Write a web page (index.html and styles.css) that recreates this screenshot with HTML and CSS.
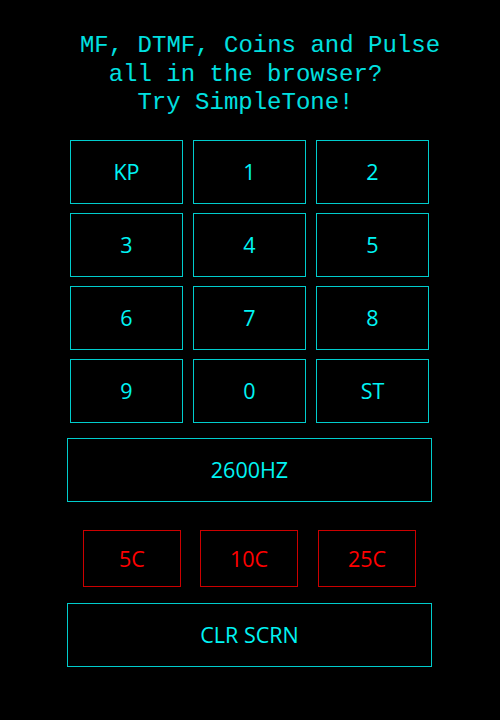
FILE: index.html
```html
<!DOCTYPE html>
<html lang="en">
<head>
<meta charset="utf-8">
<title>SimpleTone</title>
<link rel="stylesheet" href="styles.css">
</head>
<body>
<main class="app">
  <header class="intro">
    <span class="line line-first">MF, DTMF, Coins and Pulse</span>
    <span class="line">all in the browser?</span>
    <span class="line">Try SimpleTone!</span>
  </header>
  <section class="keypad">
    <button class="key">KP</button>
    <button class="key">1</button>
    <button class="key">2</button>
    <button class="key">3</button>
    <button class="key">4</button>
    <button class="key">5</button>
    <button class="key">6</button>
    <button class="key">7</button>
    <button class="key">8</button>
    <button class="key">9</button>
    <button class="key">0</button>
    <button class="key">ST</button>
  </section>
  <button class="key wide tone">2600HZ</button>
  <section class="coins">
    <button class="coin">5C</button>
    <button class="coin">10C</button>
    <button class="coin coin-last">25C</button>
  </section>
  <button class="key wide clear">CLR SCRN</button>
</main>
</body>
</html>
```
FILE: styles.css
```css
html, body {
  margin: 0;
  padding: 0;
  background: #000;
}
.app {
  box-sizing: border-box;
  width: 500px;
  height: 720px;
  padding-right: 1px;
  display: flex;
  flex-direction: column;
  align-items: center;
}
.intro {
  margin-top: 32px;
  padding-right: 8px;
  font-family: "Liberation Mono", monospace;
  font-size: 24px;
  line-height: 28.5px;
  color: #00e0e0;
  text-align: center;
}
.line {
  display: block;
  white-space: pre;
}
.line-first {
  padding-left: 29px;
}
.keypad {
  margin-top: 22px;
  display: grid;
  grid-template-columns: repeat(3, 113px);
  grid-auto-rows: 64px;
  column-gap: 10px;
  row-gap: 9px;
}
.key, .coin {
  box-sizing: border-box;
  margin: 0;
  padding: 0;
  background: #000;
  font-family: "Open Sans", sans-serif;
  font-size: 21.5px;
  display: flex;
  align-items: center;
  justify-content: center;
}
.key {
  border: 1px solid #00cccc;
  color: #00f4f4;
}
.wide {
  width: 365px;
  height: 64px;
}
.tone {
  margin-top: 15px;
}
.coins {
  margin-top: 28px;
  display: flex;
  gap: 19px;
}
.coin {
  width: 98px;
  height: 57px;
  border: 1px solid #cc0000;
  color: #ff0000;
}
.coin-last {
  margin-left: 1px;
}
.clear {
  margin-top: 16px;
}
```
